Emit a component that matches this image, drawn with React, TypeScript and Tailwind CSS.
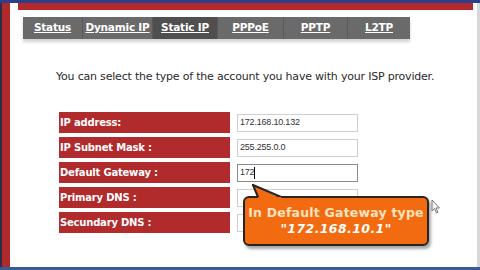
import React from "react";

const tabs = [
  { label: "Status", w: 59 },
  { label: "Dynamic IP", w: 70 },
  { label: "Static IP", w: 65, active: true },
  { label: "PPPoE", w: 66 },
  { label: "PPTP", w: 64 },
  { label: "L2TP", w: 63 },
];

const rows = [
  { label: "IP address:", value: "172.168.10.132" },
  { label: "IP Subnet Mask :", value: "255.255.0.0" },
  { label: "Default Gateway :", value: "172", focus: true },
  { label: "Primary DNS :", value: "" },
  { label: "Secundary DNS :", value: "" },
];

export default function App() {
  return (
    <div
      className="relative w-[480px] h-[270px] overflow-hidden bg-white flex flex-col"
      style={{ fontFamily: "Verdana, 'DejaVu Sans', sans-serif" }}
    >
      <div className="h-[3px] bg-[#2c3f8a] shrink-0" />
      <div className="flex flex-1 min-h-0">
        <div className="w-[2px] bg-[#2a2c48]" />
        <div className="w-[8px] bg-[#b02a2c]" />
        <div className="flex-1 flex flex-col bg-white border-r-[3px] border-[#d8d8dc]">
          <div className="ml-[8px] mr-[4px] h-[7px] bg-[#b3292b]" />
          <div className="ml-[13px] mt-[7px] flex w-[387px] h-[22px] bg-[#6a6a6a] shadow-[0_3px_3px_rgba(0,0,0,0.18)]">
            {tabs.map((t, i) => (
              <div
                key={t.label}
                className={`flex items-center justify-center h-full ${
                  t.active ? "bg-[#4f4f4f]" : ""
                } ${i > 0 ? "border-l border-[#5a5a5a]" : ""}`}
                style={{ width: t.w }}
              >
                <span className="text-white font-bold underline text-[10.5px] tracking-[-0.2px]">
                  {t.label}
                </span>
              </div>
            ))}
          </div>
          <div className="ml-[46px] mt-[31px] text-[11px] text-[#2a2a2a] tracking-[-0.2px] leading-[13px] whitespace-nowrap">
            You can select the type of the account you have with your ISP provider.
          </div>
          <div className="ml-[49px] mt-[29px] flex flex-col gap-[4px]">
            {rows.map((r) => (
              <div key={r.label} className="flex items-center h-[21px] gap-[7px]">
                <div className="w-[171px] h-full bg-[#b12a2c] flex items-center pl-[1px] text-white font-bold text-[10px] tracking-[-0.2px]">
                  {r.label}
                </div>
                <div
                  className={`w-[121px] h-[18px] bg-white border ${
                    r.focus ? "border-[#8a8a8a]" : "border-[#cfcfcf]"
                  } flex items-center pl-[2px] text-[9px] tracking-[-0.2px] text-[#333]`}
                  style={{ fontFamily: "'Liberation Sans', Arial, sans-serif" }}
                >
                  {r.value}
                  {r.focus && <span className="w-px h-[12px] bg-black" />}
                </div>
              </div>
            ))}
          </div>
        </div>
      </div>
      <div className="h-[3px] bg-[#3a5a9a] shrink-0" />

      {/* callout */}
      <div className="absolute left-[243px] top-[196px] w-[186px] h-[50px] rounded-[6px] border-2 border-[#2a2420] bg-[#f26b10] shadow-[2px_3px_3px_rgba(0,0,0,0.35)] flex flex-col items-center justify-center leading-[16px] whitespace-nowrap">
        <div className="text-[#fde2bd] text-[12.5px] font-bold tracking-[0.2px]" style={{ fontFamily: "'DejaVu Sans', Verdana, sans-serif" }}>
          In Default Gateway type
        </div>
        <div className="text-white text-[12.5px] font-bold italic tracking-[0.4px]" style={{ fontFamily: "'DejaVu Sans', Verdana, sans-serif" }}>
          "172.168.10.1"
        </div>
      </div>
      <svg className="absolute left-[249px] top-[184px]" width="36" height="16" viewBox="0 0 36 16">
        <polygon points="4,1 9,15 33,15" fill="#f26b10" />
        <line x1="4" y1="1" x2="9" y2="13" stroke="#2a2420" strokeWidth="2" strokeLinecap="round" />
        <line x1="4" y1="1" x2="32" y2="13" stroke="#2a2420" strokeWidth="2" strokeLinecap="round" />
        <polygon points="9,13 32,13 33,16 9,16" fill="#f26b10" />
      </svg>
      {/* cursor */}
      <svg className="absolute left-[431px] top-[199px]" width="10" height="15" viewBox="0 0 10 15">
        <path d="M1 1 L1 12 L3.5 9.5 L5.5 14 L7 13.3 L5 9 L8.5 9 Z" fill="#f4f4f4" stroke="#777" strokeWidth="1" strokeLinejoin="round" />
      </svg>
    </div>
  );
}
